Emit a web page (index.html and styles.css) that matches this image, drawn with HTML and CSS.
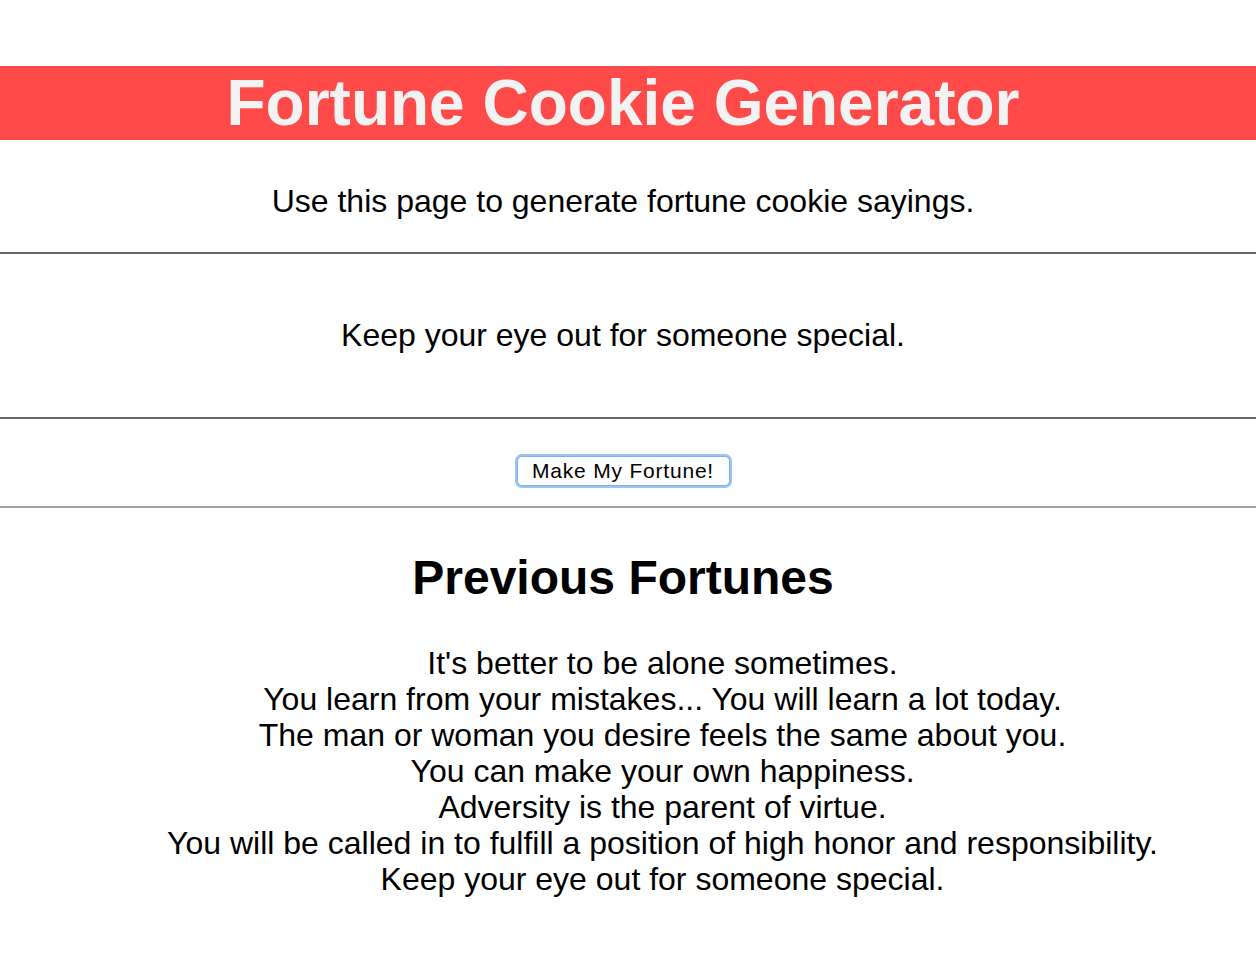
FILE: index.html
```html
<!DOCTYPE html>
<html>
<head>
<meta charset="utf-8">
<title>Fortune Cookie Generator</title>
<link rel="stylesheet" href="styles.css">
</head>
<body>
<div class="page">
  <h1 class="title">Fortune Cookie Generator</h1>
  <p class="intro">Use this page to generate fortune cookie sayings.</p>
  <hr class="rule">
  <p class="fortune">Keep your eye out for someone special.</p>
  <hr class="rule">
  <div class="actions"><button class="make-btn">Make My Fortune!</button></div>
  <hr class="rule rule-light">
  <h2 class="prev-title">Previous Fortunes</h2>
  <ul class="prev-list">
    <li>It's better to be alone sometimes.</li>
    <li>You learn from your mistakes... You will learn a lot today.</li>
    <li>The man or woman you desire feels the same about you.</li>
    <li>You can make your own happiness.</li>
    <li>Adversity is the parent of virtue.</li>
    <li>You will be called in to fulfill a position of high honor and responsibility.</li>
    <li>Keep your eye out for someone special.</li>
  </ul>
</div>
</body>
</html>
```
FILE: styles.css
```css
html, body {
  margin: 0;
  padding: 0;
  background: #ffffff;
}
body {
  font-family: "Liberation Sans", Arial, Helvetica, sans-serif;
  color: #000;
}
.page {
  padding-top: 66px;
}
.title {
  margin: 0;
  height: 74px;
  line-height: 74px;
  padding-right: 10px;
  background: #ff4a4a;
  color: #f3f3f3;
  font-size: 64px;
  font-weight: bold;
  text-align: center;
}
.intro {
  margin: 43px 0 33px;
  padding-right: 10px;
  font-size: 32px;
  line-height: 36px;
  text-align: center;
}
.rule {
  margin: 0;
  height: 0;
  border: 0;
  border-top: 2px solid #666666;
}
.rule-light {
  border-top-color: #a3a3a3;
}
.fortune {
  margin: 63px 0 64px;
  padding-right: 10px;
  font-size: 32px;
  line-height: 36px;
  text-align: center;
}
.actions {
  padding: 37px 10px 20px 0;
  display: flex;
  justify-content: center;
}
.make-btn {
  box-sizing: border-box;
  width: 213px;
  height: 30px;
  padding: 0;
  background: #fff;
  border: 1px solid #7fb0ee;
  box-shadow: 0 0 0 2px #9cc3f2;
  border-radius: 5px;
  font-family: "Liberation Sans", Arial, sans-serif;
  font-size: 21px;
  letter-spacing: 0.8px;
  line-height: 28px;
  color: #000;
}
.prev-title {
  margin: 45px 0 0;
  padding-right: 10px;
  font-size: 48px;
  line-height: 50px;
  font-weight: bold;
  text-align: center;
}
.prev-list {
  list-style: none;
  margin: 42px 0 0;
  padding: 0 10px 40px 79px;
  text-align: center;
  font-size: 32px;
  line-height: 36px;
}
```
